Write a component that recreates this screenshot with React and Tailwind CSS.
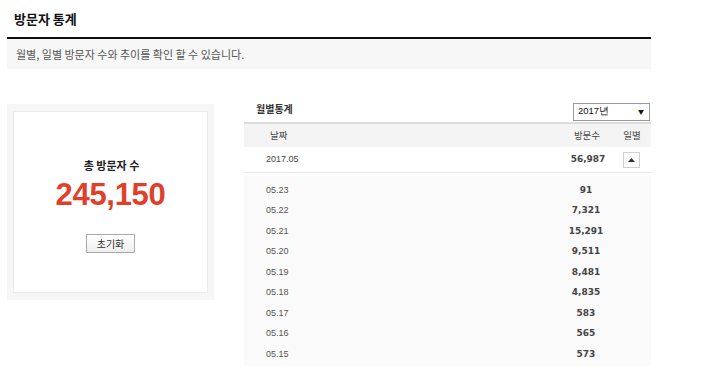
import React from 'react';

const daily = [
  ['05.23', '91'],
  ['05.22', '7,321'],
  ['05.21', '15,291'],
  ['05.20', '9,511'],
  ['05.19', '8,481'],
  ['05.18', '4,835'],
  ['05.17', '583'],
  ['05.16', '565'],
  ['05.15', '573'],
];

const kr = { fontFamily: '"Noto Sans CJK KR", "Noto Sans", sans-serif' };
const num = { fontFamily: '"Liberation Sans", Arial, sans-serif' };
const wide = { fontFamily: '"DejaVu Sans", Verdana, sans-serif' };

export default function App() {
  return (
    <div className="w-[720px] h-[377px] bg-white px-[7px] overflow-hidden" style={kr}>
      {/* Title */}
      <div className="w-[644px]">
        <div className="h-[37px] flex items-center pl-[7px] text-[13px] font-bold text-[#111]">방문자 통계</div>
        <div className="h-[2px] bg-[#111]"></div>
        <div className="h-[30px] bg-[#f7f7f7] flex items-center pl-[9px] text-[11px] text-[#555]">
          월별, 일별 방문자 수와 추이를 확인 할 수 있습니다.
        </div>
      </div>

      <div className="flex mt-[32px]">
        {/* Total box */}
        <div className="mt-[3px] w-[207px] h-[196px] bg-[#f6f6f6] pt-[7px] pl-[6px]">
          <div className="w-[195px] h-[182px] bg-white border border-[#ebebeb] flex flex-col items-center pt-[45px]">
            <div className="text-[11px] font-bold text-[#222] leading-[16px] pl-[2px]">총 방문자 수</div>
            <div className="mt-[6px] text-[31px] font-bold text-[#e0402a] leading-[32px] tracking-[-0.3px]" style={num}>245,150</div>
            <button className="mt-[23px] w-[49px] h-[19px] border border-[#a8a8a8] rounded-[1px] bg-gradient-to-b from-white to-[#eeeeee] text-[10px] text-[#333] leading-none">
              초기화
            </button>
          </div>
        </div>

        {/* Monthly table */}
        <div className="ml-[30px] w-[407px]">
          <div className="h-[21px] flex justify-between">
            <span className="pl-[12px] pt-[1px] leading-[14px] text-[10px] font-bold text-[#333]">월별통계</span>
            <div className="self-center w-[77px] h-[18px] mr-[1px] border border-[#9a9a9a] flex items-center justify-between pl-[4px] pr-[5px] text-[9.5px] text-[#111]">
              <span style={num}>2017년</span>
              <span className="text-[6px]">▼</span>
            </div>
          </div>

          <div className="border-t-2 border-[#dcdcdc] h-[25px] bg-[#f4f4f4] flex items-center text-[9.5px] text-[#444]">
            <div className="flex-1 pl-[26px]">날짜</div>
            <div className="w-[56px] text-center">방문수</div>
            <div className="w-[36px] text-center pr-[2px]">일별</div>
          </div>

          <div className="h-[26px] flex items-center border-b border-[#e8e8e8] text-[9px]">
            <div className="flex-1 pl-[22px] text-[#444]" style={num}>2017.05</div>
            <div className="w-[56px] text-center font-bold text-[#444] pl-[2px]" style={wide}>56,987</div>
            <div className="w-[36px] flex justify-center pr-[3px]">
              <div className="w-[17px] h-[16px] border border-[#d0d0d0] bg-white flex items-center justify-center">
                <svg width="7" height="4" viewBox="0 0 7 4"><path d="M0 4 L3.5 0 L7 4 Z" fill="#333" /></svg>
              </div>
            </div>
          </div>

          <div className="mt-[3px] bg-[#fafafa] pt-[4px] pb-[1px] text-[9px]">
            {daily.map(([d, v]) => (
              <div key={d} className="h-[20.5px] flex items-center">
                <div className="flex-1 pl-[22px] text-[#555]" style={num}>{d}</div>
                <div className="w-[56px] text-center font-bold text-[#444] pr-[2px]" style={wide}>{v}</div>
                <div className="w-[36px]"></div>
              </div>
            ))}
          </div>
        </div>
      </div>
    </div>
  );
}
